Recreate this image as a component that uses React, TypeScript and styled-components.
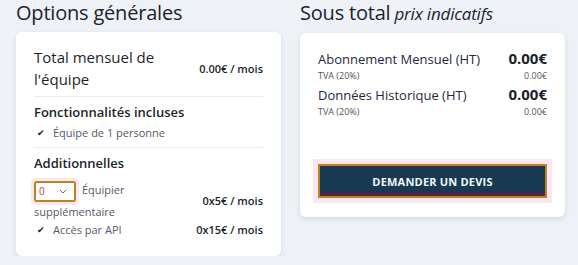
import React from "react"
import styled, { createGlobalStyle } from "styled-components"

const Global = createGlobalStyle`
  html, body { margin: 0; padding: 0; background: #eef2f7; }
  body { font-family: "Open Sans", "Liberation Sans", sans-serif; color: #1c1f2a; }
`

const Page = styled.div`
  display: grid;
  grid-template-columns: 265px 265px;
  column-gap: 19px;
  padding: 2px 0 0 16px;
  align-items: start;
`

const Column = styled.div`
  display: flex;
  flex-direction: column;
`

const Title = styled.h2`
  margin: 0 0 8px 0;
  font-size: 20px;
  font-weight: 500;
  line-height: 22px;
  letter-spacing: -0.2px;
  color: #20232d;
  em {
    font-size: 17px;
    font-weight: 400;
    margin-left: 4px;
  }
`

const Card = styled.div<{ $pt: number; $pb: number }>`
  background: #fff;
  border-radius: 6px;
  box-shadow: 0 2px 5px rgba(30, 40, 70, 0.12);
  padding: ${(p) => p.$pt}px 18px ${(p) => p.$pb}px 18px;
`

const Row = styled.div`
  display: flex;
  justify-content: space-between;
  align-items: center;
`

const Big = styled.div`
  font-size: 15px;
  font-weight: 500;
  line-height: 22px;
  width: 150px;
`

const Price = styled.div`
  font-size: 11px;
  font-weight: 600;
  white-space: nowrap;
`

const Divider = styled.div`
  height: 1px;
  background: #e8ebf0;
  margin: 6px 0 5px;
`

const Section = styled.div<{ $mb: number }>`
  font-size: 13px;
  font-weight: 600;
  line-height: 20px;
  margin-bottom: ${(p) => p.$mb}px;
`

const Check = styled.div`
  font-size: 11px;
  color: #555a66;
  line-height: 16px;
  display: flex;
  align-items: center;
  gap: 8px;
  &::before {
    content: "✔";
    font-size: 9px;
    color: #222;
    margin-left: 3px;
  }
`

const Extra = styled.div`
  font-size: 11px;
  color: #555a66;
  line-height: 20px;
  width: 140px;
`

const SelectWrap = styled.span`
  display: inline-flex;
  align-items: center;
  justify-content: space-between;
  box-sizing: border-box;
  width: 42px;
  height: 21px;
  padding: 0 7px 0 3px;
  margin-right: 6px;
  border: 2px solid #b8861c;
  border-radius: 2px;
  background: #fff;
  outline: 3px solid #fde6f3;
  color: #c04050;
  font-size: 10px;
  vertical-align: middle;
`

const Line = styled.div`
  display: flex;
  justify-content: space-between;
  align-items: baseline;
`

const Label = styled.div`
  font-size: 13px;
  line-height: 18px;
  color: #25283a;
`

const Amount = styled.div`
  font-size: 15px;
  font-weight: 700;
`

const Small = styled.div`
  font-size: 9px;
  color: #555;
  line-height: 16px;
`

const Button = styled.button`
  display: block;
  width: 100%;
  margin-top: 44px;
  height: 34px;
  box-sizing: border-box;
  background: #173a52;
  color: #f3f5f8;
  font-family: "Open Sans", sans-serif;
  font-weight: 700;
  font-size: 11px;
  letter-spacing: 0.2px;
  border: 2px solid #b8861c;
  box-shadow: inset 0 -3px 0 #5a1e4a, inset 0 1px 0 #5a1e4a;
  outline: 5px solid #fde6f3;
  cursor: pointer;
`

function Chevron() {
  return (
    <svg width="8" height="5" viewBox="0 0 8 5">
      <path d="M1 1l3 3 3-3" stroke="#666" strokeWidth="1" fill="none" />
    </svg>
  )
}

export default function App() {
  return (
    <>
      <Global />
      <Page>
        <Column>
          <Title>Options générales</Title>
          <Card $pt={14} $pb={18}>
            <Row>
              <Big>Total mensuel de l'équipe</Big>
              <Price>0.00€ / mois</Price>
            </Row>
            <Divider />
            <Section $mb={3}>Fonctionnalités incluses</Section>
            <Check>Équipe de 1 personne</Check>
            <Divider />
            <Section $mb={7}>Additionnelles</Section>
            <Row>
              <Extra>
                <SelectWrap>
                  0 <Chevron />
                </SelectWrap>
                Équipier supplémentaire
              </Extra>
              <Price>0x5€ / mois</Price>
            </Row>
            <Row>
              <Check>Accès par API</Check>
              <Price>0x15€ / mois</Price>
            </Row>
          </Card>
        </Column>
        <Column>
          <Title>
            Sous total<em>prix indicatifs</em>
          </Title>
          <Card $pt={15} $pb={19}>
            <Line>
              <Label>Abonnement Mensuel (HT)</Label>
              <Amount>0.00€</Amount>
            </Line>
            <Line>
              <Small>TVA (20%)</Small>
              <Small>0.00€</Small>
            </Line>
            <Line>
              <Label>Données Historique (HT)</Label>
              <Amount>0.00€</Amount>
            </Line>
            <Line>
              <Small>TVA (20%)</Small>
              <Small>0.00€</Small>
            </Line>
            <Button>DEMANDER UN DEVIS</Button>
          </Card>
        </Column>
      </Page>
    </>
  )
}
